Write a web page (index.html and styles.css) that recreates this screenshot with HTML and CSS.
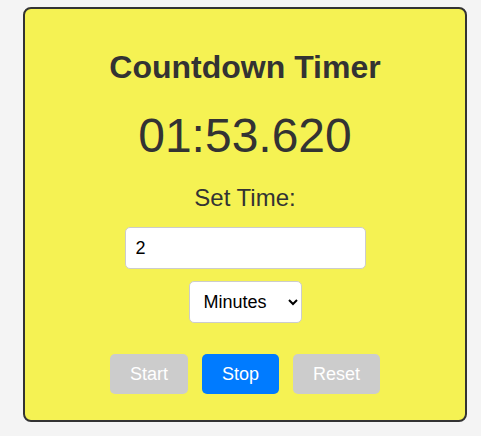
FILE: index.html
```html
<!DOCTYPE html>
<html lang="en">
<head>
<meta charset="utf-8">
<title>Countdown Timer</title>
<link rel="stylesheet" href="styles.css">
</head>
<body>
<div class="card">
  <h1 class="title">Countdown Timer</h1>
  <div class="timer">01:53.620</div>
  <div class="label">Set Time:</div>
  <div class="row">
    <input class="time-input" type="text" value="2">
  </div>
  <div class="row">
    <select class="unit">
      <option>Minutes</option>
      <option>Seconds</option>
    </select>
  </div>
  <div class="buttons">
    <button class="btn btn-disabled">Start</button>
    <button class="btn btn-primary">Stop</button>
    <button class="btn btn-disabled">Reset</button>
  </div>
</div>
</body>
</html>
```

FILE: styles.css
```css
html, body {
  margin: 0;
  padding: 0;
  background: #f4f4f4;
}
body {
  font-family: "Liberation Sans", Arial, sans-serif;
  color: #333;
  padding-top: 7px;
  padding-left: 23px;
}
.card {
  box-sizing: border-box;
  width: 444px;
  height: 415px;
  border: 2px solid #333;
  border-radius: 8px;
  background: #f5f253;
  padding: 40px 20px 25px;
  text-align: center;
}
.title {
  margin: 0 0 22px;
  font-size: 32px;
  font-weight: bold;
  line-height: 36.8px;
}
.timer {
  font-size: 48px;
  line-height: 55px;
  margin-bottom: 21px;
}
.label {
  font-size: 24px;
  line-height: 27.6px;
  margin-bottom: 16px;
}
.row {
  display: flex;
  justify-content: center;
}
.time-input {
  box-sizing: border-box;
  width: 241px;
  height: 42px;
  padding: 0 10px;
  border: 1px solid #ccc;
  border-radius: 5px;
  background: #fff;
  font-family: "Liberation Sans", Arial, sans-serif;
  font-size: 18px;
  color: #000;
  margin-bottom: 12px;
  outline: none;
}
.unit {
  box-sizing: border-box;
  width: 113px;
  height: 42px;
  padding: 0 6px 0 10px;
  border: 1px solid #ccc;
  border-radius: 5px;
  background: #fff;
  font-family: "Liberation Sans", Arial, sans-serif;
  font-size: 18px;
  color: #000;
}
.buttons {
  display: flex;
  justify-content: center;
  gap: 14px;
  margin-top: 31px;
}
.btn {
  box-sizing: border-box;
  height: 40px;
  padding: 0 20px;
  border: none;
  border-radius: 5px;
  font-family: "Liberation Sans", Arial, sans-serif;
  font-size: 18px;
  color: #fff;
}
.btn-disabled {
  background: #ccc;
}
.btn-primary {
  background: #007bff;
}
```
